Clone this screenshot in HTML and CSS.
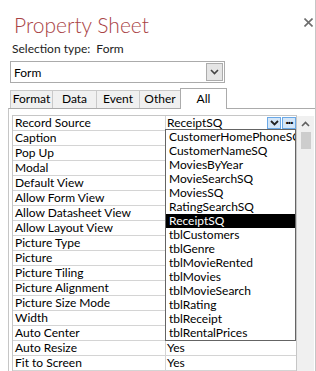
FILE: index.html
```html
<!DOCTYPE html>
<html lang="en">
<head>
  <meta charset="UTF-8">
  <title>Property Sheet</title>
  <link rel="stylesheet" href="styles.css">
</head>
<body>
  <div class="pane">
    <div class="header">
      <h1 class="title">Property Sheet</h1>
      <svg class="close" width="9" height="9" viewBox="0 0 9 9">
        <path d="M0.5 0.5 L8.5 8.5 M8.5 0.5 L0.5 8.5" stroke="#6d6d6d" stroke-width="1.6"/>
      </svg>
    </div>
    <div class="selection">Selection type:&nbsp;&nbsp;Form</div>

    <div class="combo">
      <span>Form</span>
      <span class="combo-btn">
        <svg width="9" height="6" viewBox="0 0 9 6"><path d="M1 1 L4.5 4.5 L8 1" fill="none" stroke="#444" stroke-width="1.6"/></svg>
      </span>
    </div>

    <div class="tabs">
      <div class="tab tab-format">Format</div>
      <div class="tab tab-data">Data</div>
      <div class="tab tab-event">Event</div>
      <div class="tab tab-other">Other</div>
      <div class="tab tab-all active">All</div>
    </div>

    <div class="panel">
      <div class="grid">
        <div class="row">
          <div class="label">Record Source</div>
          <div class="value">
            <span>ReceiptSQ</span>
            <span class="cell-btns">
              <span class="cell-btn">
                <svg width="9" height="6" viewBox="0 0 9 6"><path d="M1 1 L4.5 4.5 L8 1" fill="none" stroke="#222" stroke-width="1.8"/></svg>
              </span>
              <span class="cell-btn dots">&middot;&middot;&middot;</span>
            </span>
          </div>
        </div>
        <div class="row"><div class="label">Caption</div><div class="value"></div></div>
        <div class="row"><div class="label">Pop Up</div><div class="value"></div></div>
        <div class="row"><div class="label">Modal</div><div class="value"></div></div>
        <div class="row"><div class="label">Default View</div><div class="value"></div></div>
        <div class="row"><div class="label">Allow Form View</div><div class="value"></div></div>
        <div class="row"><div class="label">Allow Datasheet View</div><div class="value"></div></div>
        <div class="row"><div class="label">Allow Layout View</div><div class="value"></div></div>
        <div class="row"><div class="label">Picture Type</div><div class="value"></div></div>
        <div class="row"><div class="label">Picture</div><div class="value"></div></div>
        <div class="row"><div class="label">Picture Tiling</div><div class="value"></div></div>
        <div class="row"><div class="label">Picture Alignment</div><div class="value"></div></div>
        <div class="row"><div class="label">Picture Size Mode</div><div class="value"></div></div>
        <div class="row"><div class="label">Width</div><div class="value"></div></div>
        <div class="row"><div class="label">Auto Center</div><div class="value"></div></div>
        <div class="row"><div class="label">Auto Resize</div><div class="value">Yes</div></div>
        <div class="row"><div class="label">Fit to Screen</div><div class="value">Yes</div></div>

        <!-- lista desplegable de Record Source -->
        <ul class="dropdown">
          <li>CustomerHomePhoneSQ</li>
          <li>CustomerNameSQ</li>
          <li>MoviesByYear</li>
          <li>MovieSearchSQ</li>
          <li>MoviesSQ</li>
          <li>RatingSearchSQ</li>
          <li class="selected">ReceiptSQ</li>
          <li>tblCustomers</li>
          <li>tblGenre</li>
          <li>tblMovieRented</li>
          <li>tblMovies</li>
          <li>tblMovieSearch</li>
          <li>tblRating</li>
          <li>tblReceipt</li>
          <li>tblRentalPrices</li>
        </ul>
      </div>

      <div class="scrollbar">
        <div class="scroll-up">
          <svg width="9" height="6" viewBox="0 0 9 6"><path d="M1 5 L4.5 1.5 L8 5" fill="none" stroke="#606060" stroke-width="1.6"/></svg>
        </div>
        <div class="thumb"></div>
      </div>
    </div>
  </div>
</body>
</html>
```

FILE: styles.css
```css
body {
  margin: 0;
  background: #ffffff;
  font-family: Lato, "Liberation Sans", sans-serif;
  font-size: 12px;
  color: #000;
  overflow: hidden;
}

.pane {
  width: 316px;
  height: 371px;
  box-sizing: border-box;
  border-right: 1px solid #c6c6c6;
  overflow: hidden;
}

.header {
  display: flex;
  justify-content: space-between;
  align-items: flex-start;
  padding-top: 11px;
}

.title {
  margin: 0 0 0 14px;
  font-size: 21px;
  line-height: 28px;
  font-weight: 300;
  color: #a94345;
}

.close {
  margin: 7px 2px 0 0;
}

.selection {
  margin: 2px 0 0 12px;
  line-height: 15px;
  color: #222;
}

/* Combo */
.combo {
  margin: 5px 0 0 10px;
  width: 215px;
  height: 22px;
  box-sizing: border-box;
  border: 1px solid #ababab;
  display: flex;
  align-items: center;
  justify-content: space-between;
  padding: 0 1px 0 3px;
}

.combo-btn {
  width: 17px;
  height: 18px;
  box-sizing: border-box;
  border: 1px solid #acacac;
  background: #e5e5e5;
  display: flex;
  align-items: center;
  justify-content: center;
}

/* Tabs */
.tabs {
  display: flex;
  align-items: flex-end;
  margin: 5px 0 0 10px;
  height: 20px;
}

.tab {
  box-sizing: border-box;
  height: 18px;
  line-height: 16px;
  text-align: center;
  border: 1px solid #c9c9c9;
  border-bottom: none;
  background: #f0f0f0;
  margin-right: -1px;
}

.tab-format { width: 43px; }
.tab-data { width: 45px; }
.tab-event { width: 44px; }
.tab-other { width: 42px; }
.tab-all { width: 47px; }

.tab.active {
  height: 21px;
  line-height: 19px;
  background: #ffffff;
  border-color: #ababab;
  margin-bottom: -1px;
  position: relative;
}

/* Panel */
.panel {
  margin-left: 8px;
  border-left: 1px solid #c6c6c6;
  border-top: 1px solid #ababab;
  padding: 6px 0 0 3px;
  display: flex;
  height: 300px;
}

.grid {
  position: relative;
  width: 285px;
  box-sizing: border-box;
  border: 1px solid #c6c6c6;
  border-bottom: none;
  align-self: flex-start;
}

.row {
  display: flex;
  height: 15px;
  box-sizing: border-box;
  border-bottom: 1px solid #d4d4d4;
  line-height: 14px;
}

.label {
  width: 153px;
  padding-left: 2px;
  box-sizing: border-box;
  border-right: 1px solid #d4d4d4;
  white-space: nowrap;
}

.value {
  flex: 1;
  display: flex;
  justify-content: space-between;
  padding-left: 1px;
}

.cell-btns {
  display: flex;
  gap: 1px;
  padding-top: 1px;
}

.cell-btn {
  width: 14px;
  height: 12px;
  box-sizing: border-box;
  border: 1px solid #6aa8e6;
  background: #d4e6f8;
  display: flex;
  align-items: center;
  justify-content: center;
}

.cell-btn.dots {
  font-size: 12px;
  font-weight: bold;
  line-height: 8px;
  letter-spacing: -1px;
  align-items: flex-start;
}

/* Dropdown */
.dropdown {
  position: absolute;
  left: 152px;
  top: 13px;
  width: 131px;
  margin: 0;
  padding: 0;
  list-style: none;
  background: #ffffff;
  border: 1px solid #646464;
  box-sizing: border-box;
  overflow: hidden;
}

.dropdown li {
  height: 14px;
  line-height: 14px;
  padding-left: 3px;
  white-space: nowrap;
}

.dropdown li.selected {
  background: #000;
  color: #fff;
}

/* Scrollbar */
.scrollbar {
  width: 17px;
  margin-top: 1px;
  background: #f0f0f0;
  height: 260px;
}

.scroll-up {
  height: 15px;
  display: flex;
  align-items: center;
  justify-content: center;
}

.thumb {
  width: 10px;
  height: 17px;
  margin: 1px 0 0 4px;
  background: #cdcdcd;
}
```
